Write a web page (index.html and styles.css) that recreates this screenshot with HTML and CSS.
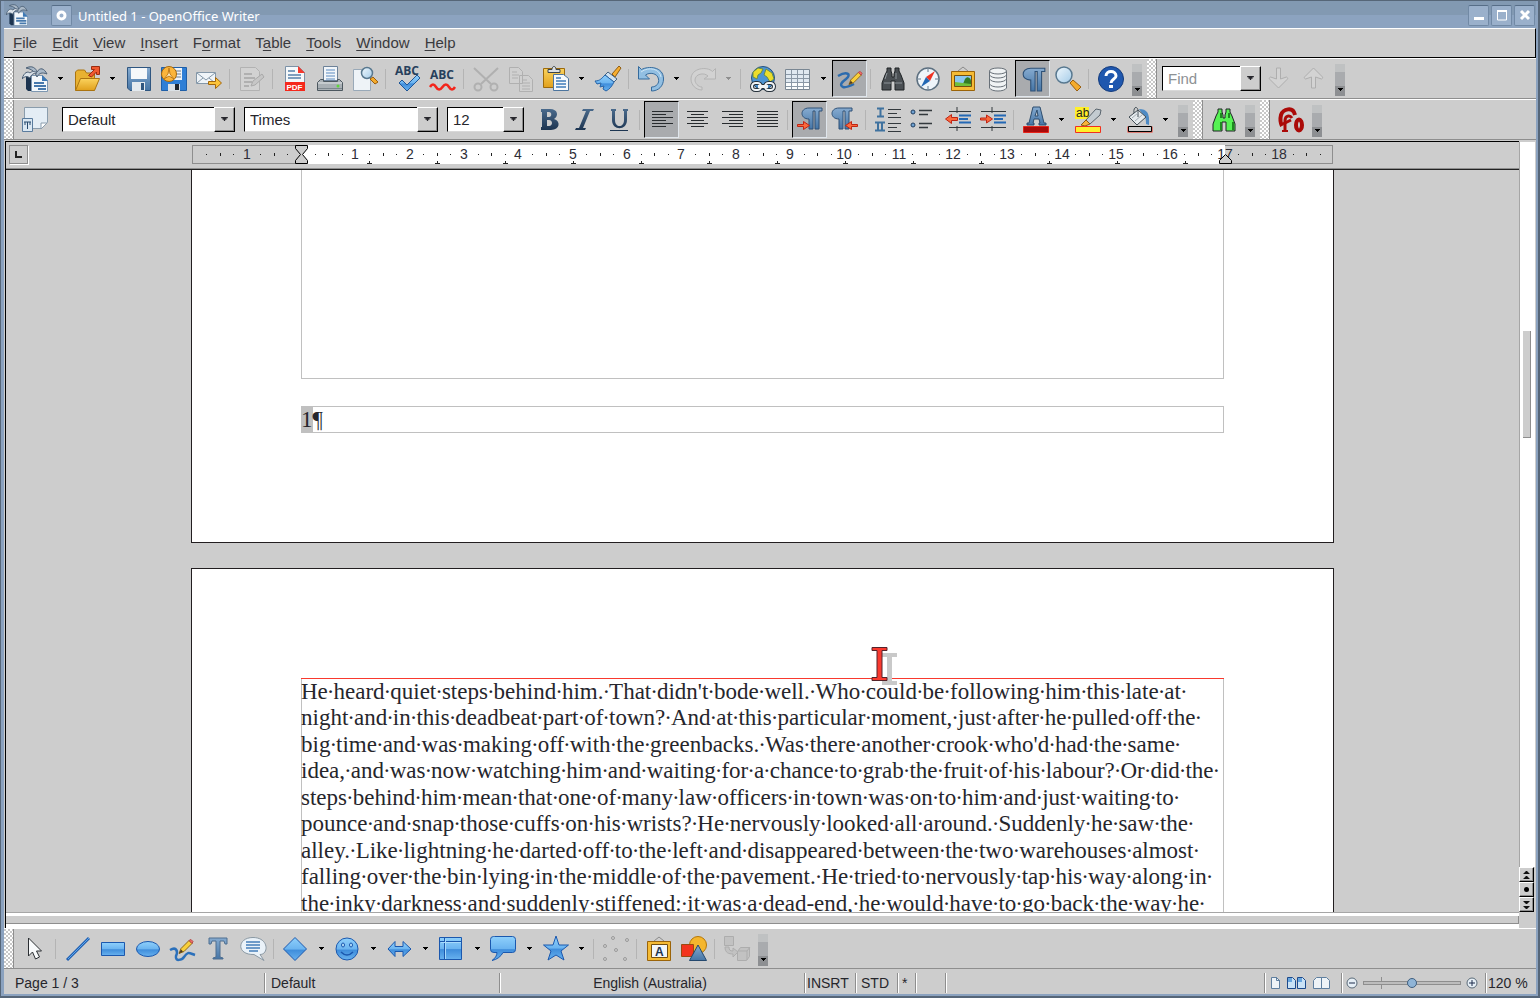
FILE: index.html
```html
<!DOCTYPE html>
<html lang="en">
<head>
    <meta charset="UTF-8">
    <title>Untitled 1 - OpenOffice Writer</title>
    <link rel="stylesheet" href="styles.css">
</head>
<body>
    <!-- shared gradients and symbols -->
    <svg class="defs" width="0" height="0" aria-hidden="true">
        <defs>
            <linearGradient id="blue" x1="0" y1="0" x2="0" y2="1"><stop offset="0" stop-color="#8fd0fb"/><stop offset=".5" stop-color="#6bb4f0"/><stop offset=".55" stop-color="#3f8ddb"/><stop offset="1" stop-color="#68b2ef"/></linearGradient>
            <linearGradient id="steel" x1="0" y1="0" x2="0" y2="1"><stop offset="0" stop-color="#86abd0"/><stop offset="1" stop-color="#4575a6"/></linearGradient>
            <linearGradient id="gold" x1="0" y1="0" x2="0" y2="1"><stop offset="0" stop-color="#fbd35e"/><stop offset="1" stop-color="#e0a01c"/></linearGradient>
            <linearGradient id="navy" x1="0" y1="0" x2="0" y2="1"><stop offset="0" stop-color="#4a6a8c"/><stop offset="1" stop-color="#1c3450"/></linearGradient>
            <linearGradient id="glass" x1="0" y1="0" x2="1" y2="1"><stop offset="0" stop-color="#f0f8fd"/><stop offset="1" stop-color="#a4cbe8"/></linearGradient>
        </defs>
        <symbol id="arrow" viewBox="0 0 5 3"><path d="M0 0h5v1H4v1H3v1H2V2H1V1H0z" fill="currentColor"/></symbol>
        <symbol id="writer" viewBox="0 0 26 26">
            <path d="M4 9h9v16H6l-2-2z" fill="#1c3450"/>
            <path d="M9.500 9.500h11l5 5v11h-16z" fill="#f4f8fb" stroke="#7d97b1"/>
            <path d="M20 9v6h6z" fill="#3d78b4"/>
            <path d="M12 17h10M12 20h12M16 23h8" stroke="#4779ad" stroke-width="2"/>
            <path d="M4 2c6-3 10 0 11 4 3-5 7-4 10 2-5-2-8-1-10 3-2-5-5-8-11-9z" fill="#a9b8c7" stroke="#4c6076"/>
            <path d="M0 13c2-7 6-8 8-6 2-2 5-2 7 0-4 0-6 2-7 5-3-2-5-2-8 1z" fill="#dce3ea" stroke="#4c6076"/>
        </symbol>
        <symbol id="pencil" viewBox="0 0 16 16"><path d="M1 15l2-5 8-8 3 3-8 8z" fill="#f8cf3b" stroke="#8f6816"/><path d="M11 2l2-1 2 2-1 2z" fill="#ef6c68" stroke="#b64a48"/><path d="M1 15l2-4 2 2z" fill="#4d3a22"/></symbol>
        <symbol id="pilcrow" viewBox="0 0 22 24"><path d="M21 2v3h-3v18h-4V5h-2v18H8V13C3 13 1 10 1 7.500S3 2 8 2z" fill="url(#steel)" stroke="#2e5177"/></symbol>
        <symbol id="red-arrow" viewBox="0 0 13 9"><path d="M.5 3.500h6v-3l6 4-6 4v-3h-6z" fill="#fb6a3c" stroke="#c02414"/></symbol>
        <symbol id="binoculars" viewBox="0 0 26 26"><path d="M7 2h4v3l1 3v3h2V8l1-3V2h4v3l2 4 3 8v7h-9v-9h-4v9H2v-7l3-8 2-4z" fill="currentColor" stroke="#1e2225"/></symbol>
    </svg>

    <div class="window">
        <header class="titlebar">
            <svg class="app-icon"><use href="#writer"/></svg>
            <button class="wm" aria-label="Window menu"><svg width="11" height="11"><circle cx="5.500" cy="5.500" r="3.500" fill="none" stroke="#fff" stroke-width="3"/></svg></button>
            <h1>Untitled 1 - OpenOffice Writer</h1>
            <button class="wm" aria-label="Minimize"><svg width="12" height="12"><path d="M1 9.500h10" stroke="#fff" stroke-width="3"/></svg></button>
            <button class="wm" aria-label="Maximize"><svg width="12" height="12"><path d="M1.500 2h9v9h-9z" fill="none" stroke="#fff"/><path d="M1 2h10" stroke="#fff" stroke-width="2"/></svg></button>
            <button class="wm" aria-label="Close"><svg width="12" height="12"><path d="M2 2l8 8M10 2l-8 8" stroke="#fff" stroke-width="3"/></svg></button>
        </header>

        <nav class="menubar">
            <a href="#"><u>F</u>ile</a>
            <a href="#"><u>E</u>dit</a>
            <a href="#"><u>V</u>iew</a>
            <a href="#"><u>I</u>nsert</a>
            <a href="#">F<u>o</u>rmat</a>
            <a href="#">T<u>a</u>ble</a>
            <a href="#"><u>T</u>ools</a>
            <a href="#"><u>W</u>indow</a>
            <a href="#"><u>H</u>elp</a>
        </nav>

        <!-- standard toolbar -->
        <div class="toolbar">
            <span class="grip"></span>
            <button class="tool" aria-label="New"><svg><use href="#writer"/></svg></button>
            <button class="drop" aria-label="New menu"><svg><use href="#arrow"/></svg></button>
            <button class="tool" aria-label="Open"><svg viewBox="0 0 26 26"><path d="M1.500 24V6l2-2h7l2 3h8v17z" fill="#e8b232" stroke="#ab7410"/><path d="M1.500 24.500l5-12h19l-5 12z" fill="url(#gold)" stroke="#ab7410"/><path d="M14.500 9.500l6-6h-3v-3h8v8h-3V6l-5 5z" fill="#f0592f" stroke="#9c2c10"/></svg></button>
            <button class="drop" aria-label="Open menu"><svg><use href="#arrow"/></svg></button>
            <button class="tool" aria-label="Save"><svg viewBox="0 0 26 26"><path d="M1.500 1.500h23v23H4l-2.500-2.500z" fill="url(#steel)" stroke="#2f5680"/><path d="M5 2h16v11H5z" fill="#f5f8fa"/><path d="M6 16h13v9H6z" fill="#e4eaef"/><path d="M15 17h3v7h-3z" fill="#2f5680"/></svg></button>
            <button class="tool" aria-label="Save As"><svg viewBox="0 0 26 26"><path d="M.5 1.500h25v23H.5z" fill="#2f7fd6" stroke="#1f5fa8"/><path d="M12 2h9v12h-9z" fill="#eef3f7"/><path d="M15 5h5M15 8h5M15 11h5" stroke="#6c7c8c"/><path d="M7 18h12v7H7z" fill="#dbe1e6"/><path d="M14 18h4v6h-4z" fill="#20262d"/><circle cx="8" cy="8" r="7.500" fill="#fbb53b" stroke="#a5680d"/><path d="M8 2l1 6 4 5-5-3-5 3 4-5z" fill="#fff3cf" stroke="#c07a14"/></svg></button>
            <button class="tool" aria-label="E-mail"><svg viewBox="0 0 26 26"><path d="M.5 6.500h19v11H.5z" fill="#eff4f8" stroke="#8497a8"/><path d="M1 7l9 7 9-7M1 17l6-5M19 17l-6-5" fill="none" stroke="#8497a8"/><path d="M12.500 15.500h7v-4l6 5.500-6 5.500v-4h-7z" fill="#fbc43a" stroke="#a4660c"/></svg></button>
            <span class="sep"></span>
            <button class="tool" aria-label="Edit file" disabled><svg viewBox="0 0 26 26"><path d="M1.500 1.500h15l4 4v19h-19z" fill="#d2d2d2" stroke="#b2b2b2"/><path d="M5 8h8M5 12h11M5 16h8M5 20h5" stroke="#b0b0b0" stroke-width="2"/><path d="M12 20l2-5 9-7 2 3-9 8z" fill="#c6c6c6" stroke="#a9a9a9"/></svg></button>
            <span class="sep"></span>
            <button class="tool" aria-label="Export PDF"><svg viewBox="0 0 26 26"><path d="M3.500.5h13l6 6v18h-19z" fill="#f5f8fa" stroke="#7c92a8"/><path d="M16 0v7h7z" fill="#f5382c"/><path d="M6 5h7M6 9h13M6 12h13" stroke="#5580aa" stroke-width="1.500"/><path d="M3 16h20v9H3z" fill="#f5281c"/><text x="4.500" y="24" class="pdf">PDF</text></svg></button>
            <button class="tool" aria-label="Print"><svg viewBox="0 0 26 26"><path d="M6.500.5h14v14h-14z" fill="#f2f6fa" stroke="#6d8299"/><path d="M9 4h9M9 7h9M9 10h9M9 13h9" stroke="#5b8ac0"/><path d="M.5 16.500l3-3h3v2h14v-2h2l3 3v8H.5z" fill="#a9b0b5" stroke="#4d5860"/><path d="M1 17h24" stroke="#e3e6e8"/><path d="M1 22.500h24" stroke="#7c868d"/><circle cx="21" cy="20" r="1.500" fill="#5ed83c"/></svg></button>
            <button class="tool" aria-label="Page Preview"><svg viewBox="0 0 26 26"><path d="M1.500 3.500h17v21h-17z" fill="#eef3f7" stroke="#99a9b8"/><path d="M18 13l5 5 3-2-5-5z" fill="#f4ab2c" stroke="#9a5d0d"/><circle cx="15" cy="7" r="5.500" fill="url(#glass)" stroke="#58788f" stroke-width="1.500"/></svg></button>
            <span class="sep"></span>
            <button class="tool" aria-label="Spelling"><svg viewBox="0 0 26 26"><text x="0" y="9" class="abc">ABC</text><path d="M4 17l3-3 5 5L22 9l3 3-13 13z" fill="url(#blue)" stroke="#1e5697"/></svg></button>
            <button class="tool" aria-label="AutoSpellcheck"><svg viewBox="0 0 26 26"><text x="0" y="13" class="abc">ABC</text><path d="M0 21q3-5 6 0t6.500 0 6.500 0 6 0" fill="none" stroke="#f3251b" stroke-width="2.500"/></svg></button>
            <span class="sep"></span>
            <button class="tool" aria-label="Cut" disabled><svg viewBox="0 0 26 26" fill="none" stroke="#b0b0b0" stroke-width="2"><path d="M1 2l17 16M25 2L8 18"/><circle cx="5" cy="21" r="3.500"/><circle cx="21" cy="21" r="3.500"/></svg></button>
            <button class="tool" aria-label="Copy" disabled><svg viewBox="0 0 26 26" fill="#d0d0d0" stroke="#b0b0b0"><path d="M1.500 1.500h9l4 4v12h-13zM11.500 9.500h9l4 4v12h-13z"/><path d="M4 6h5M4 9h7M4 12h6M14 14h5M14 17h8M14 20h8M14 23h8"/></svg></button>
            <button class="tool" aria-label="Paste"><svg viewBox="0 0 26 26"><path d="M.5 2.500h21v19H.5z" fill="url(#gold)" stroke="#9c6a0c"/><path d="M5 6.500h12v-3h-4c0-4-4-4-4 0H5z" fill="#dce0e3" stroke="#3d444a"/><path d="M10.500 8.500h10l5 4v12h-15z" fill="#f6f9fb" stroke="#4d759e"/><path d="M13 12h5M13 15h10M13 18h10M13 21h10" stroke="#3f7cba" stroke-width="1.500"/></svg></button>
            <button class="drop" aria-label="Paste menu"><svg><use href="#arrow"/></svg></button>
            <button class="tool" aria-label="Format Paintbrush"><svg viewBox="0 0 26 26"><path d="M17 8l7-8 2 2-6 9z" fill="#f6ae31" stroke="#8f5c10"/><path d="M13 6l9 7-3 3-9-7z" fill="#cfe2f1" stroke="#44617f"/><path d="M10 9l9 7c-2 4-4 7-8 9l-3-2 1-3-4 1 1-4-4 1-2-3c5 0 7-3 10-6z" fill="url(#blue)" stroke="#2664a8"/></svg></button>
            <span class="sep"></span>
            <button class="tool" aria-label="Undo"><svg viewBox="0 0 26 26"><path d="M.5.500l3 3C10 0 25.500 0 25.500 13c0 7-5 12-12 12v-4c5 0 8-4 7-8-1-6-9-7-13-4l4 4H.5z" fill="#92bfe2" stroke="#356b9d"/><path d="M3 6c8-6 19-3 20 5" fill="none" stroke="#cfe6f5"/></svg></button>
            <button class="drop" aria-label="Undo menu"><svg><use href="#arrow"/></svg></button>
            <button class="tool" aria-label="Redo" disabled><svg viewBox="0 0 26 26"><path d="M25.500 2.500l-3 3C17 0 1 2 1 13c0 6 5 11 11 11v-3c-4 0-7-4-7-7 0-6 9-8 13-4l-4 3h11.500z" fill="#d2d2d2" stroke="#b4b4b4"/></svg></button>
            <button class="drop dim" aria-label="Redo menu"><svg><use href="#arrow"/></svg></button>
            <span class="sep"></span>
            <button class="tool" aria-label="Hyperlink"><svg viewBox="0 0 26 26"><circle cx="13" cy="12" r="11.500" fill="#4d94d2" stroke="#24517e"/><path d="M3 6l5-4 5 1-2 4-3 2-1 4-4-2zM16 3l6 4 2 6-4 3-3-5-3-2z" fill="#ecdd2b" stroke="#6b8e46"/><g fill="none" stroke="#27323c" stroke-width="4"><rect x="2" y="17" width="9" height="7" rx="3.500"/><rect x="15" y="17" width="9" height="7" rx="3.500"/><path d="M8 20.500h10" stroke-width="5"/></g><g fill="none" stroke="#f1f4f6" stroke-width="2"><rect x="2" y="17" width="9" height="7" rx="3.500"/><rect x="15" y="17" width="9" height="7" rx="3.500"/><path d="M8 20.500h10" stroke-width="3"/></g></svg></button>
            <button class="tool" aria-label="Table"><svg viewBox="0 0 26 26"><path d="M.5 3.500h24v20H.5z" fill="#fbfdfd" stroke="#7a8793"/><path d="M1 4h23v12H1z" fill="#e0e9f1"/><path d="M1 8.500h23M1 12.500h23M1 16.500h23M1 20.500h23M6.500 4v19M12.500 4v19M18.500 4v19" stroke="#8a98a6"/></svg></button>
            <button class="drop" aria-label="Table menu"><svg><use href="#arrow"/></svg></button>
            <button class="tool pressed" aria-label="Show Draw Functions"><svg viewBox="0 0 26 26"><path d="M1 10c9-5 14-2 8 3-4 3-7 6-3 8 3 1 7-1 11-3" fill="none" stroke="#2b6bae" stroke-width="2.500"/><use href="#pencil" x="11" y="4" width="15" height="16"/></svg></button>
            <span class="sep"></span>
            <button class="tool find" aria-label="Find and Replace"><svg viewBox="0 0 26 26"><use href="#binoculars"/><path d="M4 17h7M15 17h7M7 7l-2 6M16 7v6" stroke="#8e969b"/></svg></button>
            <button class="tool" aria-label="Navigator"><svg viewBox="0 0 26 26"><circle cx="13" cy="13" r="11" fill="#eff5fa" stroke="#5d7080" stroke-width="1.500"/><path d="M13 3v3M13 20v3M3 13h3M20 13h3" stroke="#62788c"/><path d="M20 5l-5 10-4-4z" fill="#ee3324"/><path d="M6 21l5-10 4 4z" fill="#2368b4"/></svg></button>
            <button class="tool" aria-label="Gallery"><svg viewBox="0 0 26 26"><path d="M8 5l5-4 5 4" fill="none" stroke="#8a8a8a"/><path d="M1.500 5.500h23v19h-23z" fill="#f5bb35" stroke="#9b6409"/><path d="M4.500 9.500h17v11h-17z" fill="#8ac6ee" stroke="#744f0e"/><path d="M13 18l2-5c3-4 6 0 6 2v5h-8z" fill="#327b24"/><path d="M5 16l8 1 8 1v2H5z" fill="#6fbf3c"/></svg></button>
            <button class="tool" aria-label="Data Sources"><svg viewBox="0 0 26 26" fill="#f0f3f4" stroke="#687078"><path d="M4.500 18v4c2 4 15 4 17 0v-4M4.500 13v5c2 4 15 4 17 0v-5M4.500 9v4c2 4 15 4 17 0V9M4.500 5v4c2 4 15 4 17 0V5"/><ellipse cx="13" cy="5" rx="8.500" ry="3"/></svg></button>
            <button class="tool pressed" aria-label="Nonprinting Characters"><svg viewBox="0 0 26 26"><use href="#pilcrow" x="2" y="0" width="24" height="26"/></svg></button>
            <button class="tool" aria-label="Zoom"><svg viewBox="0 0 26 26"><path d="M15 17l7 8 4-4-8-7z" fill="#f4ab2c" stroke="#9a5d0d"/><circle cx="9" cy="9" r="8" fill="url(#glass)" stroke="#58788f" stroke-width="1.500"/></svg></button>
            <span class="sep"></span>
            <button class="tool" aria-label="Help"><svg viewBox="0 0 26 26"><circle cx="13" cy="13" r="12.500" fill="#1f57ae" stroke="#133b7c"/><path d="M8 10c0-6 10-6 10 0 0 3-5 3-5 7" fill="none" stroke="#fff" stroke-width="3"/><path d="M11 19h4v3h-4z" fill="#fff"/></svg></button>
            <button class="overflow" aria-label="More buttons"><svg><use href="#arrow"/></svg></button>
            <span class="grip mid"></span>
            <div class="combo combo-find">
                <input type="text" placeholder="Find" aria-label="Find">
                <span class="combo-arrow"><svg><use href="#arrow"/></svg></span>
            </div>
            <button class="tool" aria-label="Find Next" disabled><svg viewBox="0 0 26 26"><path d="M10.500 2v11l-6-2c-2 1-1 2 0 3l8 8 8-8c1-1 2-2 0-3l-6 2V2z" fill="#d3d3d3" stroke="#aeaeae"/></svg></button>
            <button class="tool" aria-label="Find Previous" disabled><svg viewBox="0 0 26 26"><path d="M10.500 22V11l-6 2c-2-1-1-2 0-3l8-8 8 8c1 1 2 2 0 3l-6-2v11z" fill="#d3d3d3" stroke="#aeaeae"/></svg></button>
            <button class="overflow" aria-label="More buttons"><svg><use href="#arrow"/></svg></button>
        </div>

        <!-- formatting toolbar -->
        <div class="toolbar">
            <span class="grip"></span>
            <button class="tool" aria-label="Styles and Formatting"><svg viewBox="0 0 26 26"><path d="M2.500.5h23v15l-6 6h-17z" fill="#e4edf5" stroke="#8a9cac"/><path d="M19 22v-6h6z" fill="#fff" stroke="#8a9cac"/><path d="M.5 11.500h10v13H.5z" fill="#dae7f2" stroke="#5b7c9e"/><path d="M2 15h7M5.500 15v7M3 15v3M8 15v3" stroke="#27496d"/></svg></button>
            <div class="combo combo-style">
                <select aria-label="Apply Style"><option>Default</option></select>
                <span class="combo-arrow"><svg><use href="#arrow"/></svg></span>
            </div>
            <div class="combo combo-font">
                <select aria-label="Font Name"><option>Times</option></select>
                <span class="combo-arrow"><svg><use href="#arrow"/></svg></span>
            </div>
            <div class="combo combo-size">
                <select aria-label="Font Size"><option>12</option></select>
                <span class="combo-arrow"><svg><use href="#arrow"/></svg></span>
            </div>
            <button class="tool" aria-label="Bold"><svg viewBox="0 0 26 26"><path d="M5 2h9c8 0 9 7 4 10 7 2 6 11-3 11H5v-3h1V5H5zm6 3v5h2c3 0 3-5 0-5zm0 8v6h2c4 0 4-6 0-6z" fill="url(#navy)"/></svg></button>
            <button class="tool" aria-label="Italic"><svg viewBox="0 0 26 26"><path d="M12 2h11l-1 2h-3l-7 17h3l-1 2H4l1-2h3l7-17h-4z" fill="url(#navy)"/></svg></button>
            <button class="tool" aria-label="Underline"><svg viewBox="0 0 26 26"><path d="M5 2h5v2H9v9c0 8 9 8 9 0V4h-1V2h5v2h-1v9c0 11-15 11-15 0V4H5zM4 23h18v1H4z" fill="url(#navy)"/></svg></button>
            <span class="sep"></span>
            <button class="tool pressed" aria-label="Align Left"><svg viewBox="0 0 26 26" stroke="#272b2e"><path d="M3 4.500h21M3 7.500h14M3 10.500h21M3 13.500h14M3 16.500h21M3 19.500h14"/></svg></button>
            <button class="tool" aria-label="Centered"><svg viewBox="0 0 26 26" stroke="#272b2e"><path d="M3 4.500h21M7 7.500h13M3 10.500h21M7 13.500h13M3 16.500h21M7 19.500h13"/></svg></button>
            <button class="tool" aria-label="Align Right"><svg viewBox="0 0 26 26" stroke="#272b2e"><path d="M3 4.500h21M10 7.500h14M3 10.500h21M10 13.500h14M3 16.500h21M10 19.500h14"/></svg></button>
            <button class="tool" aria-label="Justified"><svg viewBox="0 0 26 26" stroke="#272b2e"><path d="M3 4.500h21M3 7.500h21M3 10.500h21M3 13.500h21M3 16.500h21M3 19.500h21"/></svg></button>
            <span class="sep"></span>
            <button class="tool pressed" aria-label="Left-To-Right"><svg viewBox="0 0 26 26"><use href="#pilcrow" x="4" y="-1" width="22" height="24"/><use href="#red-arrow" x="0" y="14" width="13" height="9"/></svg></button>
            <button class="tool" aria-label="Right-To-Left"><svg viewBox="0 0 26 26"><use href="#pilcrow" x="-1" y="-1" width="22" height="24"/><path d="M25.500 17.500h-6v-3l-6 4 6 4v-3h6z" fill="#fb6a3c" stroke="#c02414"/></svg></button>
            <span class="sep"></span>
            <button class="tool" aria-label="Numbering"><svg viewBox="0 0 26 26"><path d="M2 1.500h7M2 9.500h7M5.500 1v9M0 15.500h10M0 23.500h10M3 15v9M7 15v9" stroke="#3f729f" stroke-width="2"/><path d="M13 2.500h13M13 6.500h9M13 10.500h13M13 16.500h13M13 20.500h9M13 24.500h13" stroke="#33393d"/></svg></button>
            <button class="tool" aria-label="Bullets"><svg viewBox="0 0 26 26"><path d="M9 3.500h13M9 7.500h9M9 16.500h13M9 20.500h9" stroke="#33393d" stroke-width="1.500"/><circle cx="3" cy="5" r="2" fill="#6da0d0" stroke="#203e60"/><circle cx="3" cy="18" r="2" fill="#6da0d0" stroke="#203e60"/></svg></button>
            <button class="tool" aria-label="Decrease Indent"><svg viewBox="0 0 26 26"><path d="M4 4.500h22M12 0v6M4 20.500h22M12 19v5" stroke="#33393d"/><path d="M14 8.500h12M14 12h9M14 15.500h12" stroke="#2469b5" stroke-width="2"/><path d="M12.500 10.500h-6v-3l-6 4.500 6 4.500v-3h6z" fill="#fb6a3c" stroke="#c02414"/></svg></button>
            <button class="tool" aria-label="Increase Indent"><svg viewBox="0 0 26 26"><path d="M1 4.500h25M12 0v6M1 20.500h25M12 19v5" stroke="#33393d"/><path d="M14 8.500h12M14 12h9M14 15.500h12" stroke="#2469b5" stroke-width="2"/><use href="#red-arrow" x="0" y="7" width="13" height="10"/></svg></button>
            <span class="sep"></span>
            <button class="tool" aria-label="Font Color"><svg viewBox="0 0 26 26"><path d="M4 18v-2h2L10 0h7l4 16h2v2h-7v-2h1l-1-4h-5l-1 4h1v2zM12 9h3l-1-6z" fill="url(#steel)" stroke="#2d4d6e"/><path d="M.5 19.500h25v6H.5z" fill="#a80a0a" stroke="#e8241a"/></svg></button>
            <button class="drop" aria-label="Font Color menu"><svg><use href="#arrow"/></svg></button>
            <button class="tool" aria-label="Highlighting"><svg viewBox="0 0 26 26"><path d="M0 0h14v12H0z" fill="#fff02a"/><text x="1" y="10" class="ab">ab</text><path d="M11 13L21 2l5 1-1 5-10 9z" fill="#c3cbd1" stroke="#59646d"/><path d="M6 18l5-5 4 4-5 2z" fill="#f8b33a" stroke="#8b5711"/><path d="M.5 19.500h25v6H.5z" fill="#fff02a" stroke="#f0301f"/></svg></button>
            <button class="drop" aria-label="Highlighting menu"><svg><use href="#arrow"/></svg></button>
            <button class="tool" aria-label="Background Color"><svg viewBox="0 0 26 26"><path d="M12 2c8 0 11 4 10 16l-3-1c0-6-1-8-3-9z" fill="#4d8ac4"/><path d="M2 10l9-7 8 7-9 8z" fill="#e5eaed" stroke="#424d55"/><path d="M7 6c-1-7 4-7 4-2v6" fill="none" stroke="#424d55"/><path d="M5 11l6-5M8 14l7-6" stroke="#a3adb4"/><path d="M.5 19.500h25v6H.5z" fill="#f0301f"/><path d="M1.500 19.500h23v5h-23z" fill="#cecece" stroke="#000"/></svg></button>
            <button class="drop" aria-label="Background Color menu"><svg><use href="#arrow"/></svg></button>
            <button class="overflow" aria-label="More buttons"><svg><use href="#arrow"/></svg></button>
            <span class="grip mid"></span>
            <button class="tool green" aria-label="Search"><svg viewBox="0 0 26 26"><use href="#binoculars"/><path d="M10 6v5M10 15v8M18 6v5M22 15v8" stroke="#1e8a20" stroke-width="2"/></svg></button>
            <button class="overflow" aria-label="More buttons"><svg><use href="#arrow"/></svg></button>
            <span class="grip mid"></span>
            <button class="tool" aria-label="Fontwork"><svg viewBox="0 0 26 26" fill="none" stroke="#ab0a08"><path d="M17 8C15-1 5 2 3 8c-1 4-1 7 1 11" stroke-width="4"/><path d="M7 24V14c0-6 5-6 7-3" stroke-width="3"/><path d="M5 17l8-4" stroke-width="3"/><path d="M4 24h6" stroke-width="2"/><ellipse cx="21" cy="18" rx="3" ry="5.500" stroke-width="4"/></svg></button>
            <button class="overflow" aria-label="More buttons"><svg><use href="#arrow"/></svg></button>
        </div>

        <main class="workspace">
            <div class="editor">
                <div class="ruler-bar">
                    <button class="tab-type" aria-label="Tab type"><svg width="7" height="7"><path d="M1 0v6h6" fill="none" stroke="#222" stroke-width="2"/></svg></button>
                    <svg id="ruler" width="1142" height="20"></svg>
                </div>
                <div class="document">
                    <section class="page first">
                        <div class="frame body-frame"></div>
                        <div class="frame footer-frame"><span class="field">1</span>¶</div>
                    </section>
                    <section class="page second">
                        <svg class="text-cursor" width="30" height="42"><path d="M12 7h15v4h-5v24h5v4H12v-4h5V11h-5z" fill="#c9c9c9"/><path d="M2 1.500h15v3h-5v27h5v3H2v-3h5v-27H2z" fill="#f9392e" stroke="#55232a"/></svg>
                        <div class="frame text-frame">
                            <span>He·heard·quiet·steps·behind·him.·That·didn't·bode·well.·Who·could·be·following·him·this·late·at·</span>
                            <span>night·and·in·this·deadbeat·part·of·town?·And·at·this·particular·moment,·just·after·he·pulled·off·the·</span>
                            <span>big·time·and·was·making·off·with·the·greenbacks.·Was·there·another·crook·who'd·had·the·same·</span>
                            <span>idea,·and·was·now·watching·him·and·waiting·for·a·chance·to·grab·the·fruit·of·his·labour?·Or·did·the·</span>
                            <span>steps·behind·him·mean·that·one·of·many·law·officers·in·town·was·on·to·him·and·just·waiting·to·</span>
                            <span>pounce·and·snap·those·cuffs·on·his·wrists?·He·nervously·looked·all·around.·Suddenly·he·saw·the·</span>
                            <span>alley.·Like·lightning·he·darted·off·to·the·left·and·disappeared·between·the·two·warehouses·almost·</span>
                            <span>falling·over·the·bin·lying·in·the·middle·of·the·pavement.·He·tried·to·nervously·tap·his·way·along·in·</span>
                            <span>the·inky·darkness·and·suddenly·stiffened:·it·was·a·dead-end,·he·would·have·to·go·back·the·way·he·</span>
                        </div>
                    </section>
                </div>
                <div class="hscroll"><div class="hthumb"></div></div>
            </div>
            <div class="vscroll">
                <div class="vtrack"><div class="vthumb"></div></div>
                <button aria-label="Previous Page"><svg width="7" height="8"><path d="M0 3l3-3h1l3 3zM0 8l3-3h1l3 3z" fill="#111"/></svg></button>
                <button aria-label="Navigation"><svg width="7" height="7"><circle cx="3.500" cy="3.500" r="2.500" fill="#000"/></svg></button>
                <button aria-label="Next Page"><svg width="7" height="8"><path d="M0 0l3 3h1l3-3zM0 5l3 3h1l3-3z" fill="#111"/></svg></button>
            </div>
        </main>

        <!-- drawing toolbar -->
        <div class="toolbar">
            <span class="grip"></span>
            <button class="tool" aria-label="Select"><svg viewBox="0 0 26 26"><path d="M6.500 2v18l4-4 3 7 4-2-3-6h5z" fill="#f8fafb" stroke="#2b2f33"/></svg></button>
            <span class="sep"></span>
            <button class="tool" aria-label="Line"><svg viewBox="0 0 26 26"><path d="M2 24L24 2" stroke="#2161b4" stroke-width="3"/><path d="M3 23L24 2" stroke="#5da5e8"/></svg></button>
            <button class="tool" aria-label="Rectangle"><svg viewBox="0 0 26 26"><path d="M1.500 6.500h23v13h-23z" fill="url(#blue)" stroke="#1b58ae"/></svg></button>
            <button class="tool" aria-label="Ellipse"><svg viewBox="0 0 26 26"><ellipse cx="13" cy="13" rx="11.500" ry="7.500" fill="url(#blue)" stroke="#1b58ae"/></svg></button>
            <button class="tool" aria-label="Freeform Line"><svg viewBox="0 0 26 26"><path d="M0 14c7-4 8 2 6 6-1 6 6 4 8 1 4-6 5-4 11-2" fill="none" stroke="#2b70bb" stroke-width="2.500"/><use href="#pencil" x="8" y="2" width="16" height="17"/></svg></button>
            <button class="tool" aria-label="Text"><svg viewBox="0 0 26 26"><path d="M4 2h18v6h-2l-1-3h-4v16l3 1v1H8v-1l3-1V5H7L6 8H4z" fill="url(#steel)" stroke="#4f6f90"/></svg></button>
            <button class="tool" aria-label="Callout"><svg viewBox="0 0 26 26"><path d="M13 1.500c16 0 16 17 7 17l4 6-10-6C-4 19-3 1.500 13 1.500z" fill="#eaf2f9" stroke="#8a98a3"/><path d="M6 6h14M6 9h14M6 12h14M9 15h9" stroke="#457fb9" stroke-width="1.500"/></svg></button>
            <span class="sep"></span>
            <button class="tool" aria-label="Basic Shapes"><svg viewBox="0 0 26 26"><path d="M12 1.500L23.500 13 12 24.500.5 13z" fill="url(#blue)" stroke="#1b58ae"/></svg></button>
            <button class="drop" aria-label="Basic Shapes menu"><svg><use href="#arrow"/></svg></button>
            <button class="tool" aria-label="Symbol Shapes"><svg viewBox="0 0 26 26"><circle cx="12" cy="13" r="11" fill="url(#blue)" stroke="#1b58ae"/><path d="M6 16q6 6 12 0" fill="none" stroke="#1b58ae" stroke-width="1.500"/><ellipse cx="8" cy="9" rx="1.500" ry="2" fill="#b7e0fb" stroke="#1b58ae"/><ellipse cx="16" cy="9" rx="1.500" ry="2" fill="#b7e0fb" stroke="#1b58ae"/></svg></button>
            <button class="drop" aria-label="Symbol Shapes menu"><svg><use href="#arrow"/></svg></button>
            <button class="tool" aria-label="Block Arrows"><svg viewBox="0 0 26 26"><path d="M1 13l7-7.500v5h8v-5l8 7.500-8 7.500v-5H8v5z" fill="url(#blue)" stroke="#1b58ae"/></svg></button>
            <button class="drop" aria-label="Block Arrows menu"><svg><use href="#arrow"/></svg></button>
            <button class="tool" aria-label="Flowchart"><svg viewBox="0 0 26 26"><path d="M.5 1.500h22v22H.5z" fill="url(#blue)" stroke="#1b58ae"/><path d="M1 5.500h22M5.500 2v22" stroke="#1b58ae"/><path d="M2 6.500h20M6.500 3v20" stroke="#a8dafb"/></svg></button>
            <button class="drop" aria-label="Flowchart menu"><svg><use href="#arrow"/></svg></button>
            <button class="tool" aria-label="Callouts"><svg viewBox="0 0 26 26"><path d="M3.500.5h18q3 0 3 3v10q0 3-3 3H12c-2 4-6 7-11 8 3-2 5-5 5-8H3q-3.500 0-3.500-3v-10q0-3 3-3z" fill="url(#blue)" stroke="#1b58ae"/></svg></button>
            <button class="drop" aria-label="Callouts menu"><svg><use href="#arrow"/></svg></button>
            <button class="tool" aria-label="Stars"><svg viewBox="0 0 26 26"><path d="M13 0l3 9h9.500L18 15l3 9-8-5-8 5 3-9L.5 9H10z" fill="url(#blue)" stroke="#1b58ae"/></svg></button>
            <button class="drop" aria-label="Stars menu"><svg><use href="#arrow"/></svg></button>
            <span class="sep"></span>
            <button class="tool" aria-label="Points" disabled><svg viewBox="0 0 26 26" fill="none" stroke="#9a9a9a"><circle cx="10" cy="2" r="1.500"/><circle cx="24" cy="4" r="1.500"/><circle cx="2" cy="10" r="1.500"/><circle cx="13" cy="14" r="1.500"/><circle cx="2" cy="23" r="1.500"/><circle cx="22" cy="23" r="1.500"/></svg></button>
            <span class="sep"></span>
            <button class="tool" aria-label="Fontwork Gallery"><svg viewBox="0 0 26 26"><path d="M8 5l5-4 5 4" fill="none" stroke="#8a8a8a"/><path d="M1.500 5.500h23v19h-23z" fill="#f5bb35" stroke="#9b6409"/><path d="M5.500 8.500h16v13h-16z" fill="#f2f6f9" stroke="#744f0e"/><text x="9" y="20" class="art">A</text></svg></button>
            <button class="tool" aria-label="From File"><svg viewBox="0 0 26 26"><circle cx="17" cy="9" r="8.500" fill="#f4b62e" stroke="#b57708"/><path d="M.5 8.500h12v12H.5z" fill="#f3341d" stroke="#9c4a10"/><path d="M17 9l8.500 15.500h-17z" fill="url(#steel)" stroke="#23486e"/></svg></button>
            <span class="sep"></span>
            <button class="tool" aria-label="Extrusion" disabled><svg viewBox="0 0 26 26" fill="#c2c2c2" stroke="#adadad"><path d="M.5.5h9v9h-9zM1 11c0 6 4 7 8 7v3l5-5-5-4v3c-3 0-4-1-4-4z"/><path d="M13.500 15.500l3-4h9v9l-3 4h-9zM14 15h9v9M23 15l3-4"/></svg></button>
            <button class="overflow" aria-label="More buttons"><svg><use href="#arrow"/></svg></button>
        </div>

        <footer class="statusbar">
            <span class="status-page">Page 1 / 3</span>
            <span class="status-style">Default</span>
            <span class="status-lang">English (Australia)</span>
            <span class="status-mode">INSRT</span>
            <span class="status-sel">STD</span>
            <span class="status-mod">*</span>
            <span class="status-sign"></span>
            <span class="status-info"></span>
            <span class="status-view">
                <button aria-label="Single page"><svg width="10" height="12"><path d="M.5.5h5l3 3v8h-8z" fill="#eef3f7" stroke="#5f7f9f"/><path d="M5.500 0v3.500H9" fill="none" stroke="#5f7f9f"/></svg></button>
                <button aria-label="Several pages"><svg width="20" height="12"><path d="M.5.5h5l3 3v8h-8zM10.500.5h5l3 3v8h-8z" fill="#c9e2f6" stroke="#1c4a8c"/><path d="M1 1h4v4H1zM11 1h4v4h-4z" fill="#69a6de"/></svg></button>
                <button aria-label="Book mode"><svg width="18" height="12"><path d="M.5 3.500l3-3h5v11h-8zM8.500.5h5l3 3v8h-8z" fill="#eef3f7" stroke="#5f7f9f"/></svg></button>
            </span>
            <span class="status-zoom">
                <button aria-label="Zoom out"><svg width="12" height="12"><circle cx="6" cy="6" r="5" fill="#e6eff6" stroke="#5a6a78"/><path d="M3 6h6" stroke="#1c2c4c"/></svg></button>
                <input type="range" min="0" max="100" value="50" aria-label="Zoom">
                <button aria-label="Zoom in"><svg width="12" height="12"><circle cx="6" cy="6" r="5" fill="#e6eff6" stroke="#5a6a78"/><path d="M3 6h6M6 3v6" stroke="#1c2c4c"/></svg></button>
            </span>
            <span class="status-percent">120 %</span>
        </footer>
    </div>
    <script src="script.js"></script>
</body>
</html>
```
FILE: styles.css
```css
* {
    box-sizing: border-box;
}

body {
    margin: 0;
    background: #8ba2bf;
    color: #26262c;
    font-family: "Liberation Sans", Arial, sans-serif;
    font-size: 15px;
}

button {
    padding: 0;
    border: none;
    background: none;
    color: #000;
    font: inherit;
}

svg {
    display: block;
}

.defs {
    position: absolute;
}

.window {
    display: flex;
    flex-direction: column;
    height: 100vh;
    padding: 0 2px 2px 3px;
    border: 1px solid #566678;
    border-right-width: 2px;
    border-bottom-width: 2px;
}

/* title bar */
.titlebar {
    display: flex;
    align-items: center;
    gap: 2px;
    flex: none;
    height: 27px;
    padding: 1px 1px 0 2px;
    background: linear-gradient(#8299b2 14px, #8ca3c0 14px);
}

.titlebar h1 {
    flex: 1;
    margin: 0 0 0 4px;
    padding-top: 1px;
    color: #fff;
    font: 13px "Noto Sans", sans-serif;
}

.app-icon {
    width: 22px;
    height: 22px;
    margin-right: 21px;
}

.wm {
    display: flex;
    align-items: center;
    justify-content: center;
    width: 21px;
    height: 21px;
    border: 1px solid #7189a5;
    border-top-color: #566d87;
    border-radius: 2px;
    background: #9ab0cb;
}

/* menu bar */
.menubar {
    display: flex;
    align-items: center;
    flex: none;
    gap: 15px;
    height: 30px;
    padding: 0 0 2px 9px;
    border-top: 1px solid #fff;
    border-right: 1px solid #000;
    border-bottom: 1px solid #000;
    background: #cdcdcd;
}

.menubar a {
    color: #3a3a3e;
    text-decoration: none;
}

.menubar u {
    text-underline-offset: 2px;
}

/* toolbars */
.toolbar {
    display: flex;
    align-items: center;
    flex: none;
    height: 41px;
    border-top: 1px solid #fff;
    border-bottom: 1px solid #8e8e8e;
    background: #cdcdcd;
}

.grip {
    width: 10px;
    height: 39px;
    margin-right: 3px;
    border-right: 1px solid #8e8e8e;
    background: conic-gradient(#fff 25%, #c8c8c8 0 50%, #fff 0 75%, #c8c8c8 0) 0 0 / 4px 4px;
}

.grip.mid {
    margin-left: 5px;
}

.tool {
    display: flex;
    align-items: center;
    justify-content: center;
    width: 35px;
    height: 37px;
}

.tool svg {
    width: 26px;
    height: 26px;
    overflow: visible;
}

.pressed {
    border: 1px solid #e0e6ec;
    border-top-color: #000;
    border-left-color: #000;
    background: #a9abae;
}

.find {
    color: #4a4f53;
}

.green {
    color: #56f254;
}

.drop {
    display: flex;
    justify-content: center;
    width: 17px;
}

.drop svg,
.overflow svg {
    width: 5px;
    height: 3px;
}

.combo-arrow svg {
    width: 7px;
    height: 4px;
}

.dim {
    color: #8f8f8f;
}

.sep {
    width: 8px;
    height: 20px;
    background: linear-gradient(#b4b4b4, #b4b4b4) 3px 0 / 1px 100% no-repeat;
}

.overflow {
    display: flex;
    align-items: flex-end;
    justify-content: center;
    width: 10px;
    height: 32px;
    margin: 2px 0 0 4px;
    padding-bottom: 5px;
    background: linear-gradient(#bfc1c2 8px, #a9abae 8px 22px, #8d8f92 22px);
}

.pdf {
    fill: #fff;
    font: bold 8px "Liberation Sans", sans-serif;
}

.abc {
    fill: #27405c;
    font: bold 12px "Open Sans", sans-serif;
}

.ab {
    fill: #222;
    font: 12px "Liberation Sans", sans-serif;
}

.art {
    fill: #1c3450;
    font: bold 12px "Liberation Sans", sans-serif;
}

/* combo boxes */
.combo {
    display: grid;
    grid-template-columns: 1fr 21px;
    height: 26px;
    margin: 0 9px 0 0;
}

.combo select,
.combo input {
    grid-area: 1 / 1 / 2 / 3;
    width: 100%;
    height: 25px;
    margin: 0;
    padding: 0 22px 0 5px;
    appearance: none;
    border: 1px solid #d8d8d8;
    border-top: 1px solid #000;
    border-left: 1px solid #000;
    border-radius: 0;
    background: #fff;
    color: #26262c;
    font: inherit;
}

.combo input::placeholder {
    color: #8d9194;
}

.combo-arrow {
    display: flex;
    align-items: center;
    justify-content: center;
    grid-area: 1 / 2;
    z-index: 1;
    height: 25px;
    border: 1px solid #fff;
    border-right-color: #000;
    border-bottom: 1px solid #000;
    background: #cdcdcd;
    box-shadow: inset -1px -1px #8e8e8e;
    pointer-events: none;
}

.combo-style {
    width: 173px;
    margin-left: 10px;
}

.combo-font {
    width: 194px;
}

.combo-size {
    width: 77px;
    margin-right: 7px;
}

.combo-find {
    width: 99px;
    margin: 0 0 0 2px;
}

/* work area */
.workspace {
    display: flex;
    flex: 1;
    min-height: 0;
    border-top: 1px solid #cdcdcd;
    border-left: 1px solid #cdcdcd;
    background: #cdcdcd;
}

.editor {
    display: flex;
    flex-direction: column;
    flex: 1;
    min-width: 0;
    border-top: 1px solid #000;
    border-left: 1px solid #000;
}

.ruler-bar {
    display: grid;
    grid-template-columns: 1fr auto 1fr;
    flex: none;
    height: 28px;
    padding: 3px 0 0;
    border-bottom: 1px solid #222;
    box-shadow: inset 0 -1px #8e8e8e;
}

.tab-type {
    display: flex;
    align-items: center;
    justify-content: center;
    width: 19px;
    height: 19px;
    margin-left: 3px;
    border: 1px solid #8e8e8e;
    box-shadow: 1px 1px #fff;
}

#ruler text {
    fill: #2d2d36;
    font-size: 14px;
    text-anchor: middle;
}

.document {
    display: flex;
    flex-direction: column;
    align-items: center;
    flex: 1;
    min-height: 0;
    gap: 25px;
    overflow: hidden;
}

.page {
    position: relative;
    flex: none;
    width: 1143px;
    padding: 0 109px;
    border: 1px solid #221e20;
    background: #fff;
    font: 23px/26px "Liberation Serif", "Times New Roman", serif;
}

.first {
    padding-bottom: 109px;
    border-top: none;
}

.second {
    padding-top: 109px;
    padding-bottom: 200px;
}

.frame {
    box-shadow: inset 0 0 0 1px #c0c0c0;
}

.body-frame {
    height: 209px;
    margin-bottom: 27px;
    box-shadow: inset 1px -1px #c0c0c0, inset -1px 0 #c0c0c0;
}

.footer-frame {
    height: 27px;
    line-height: 28px;
}

.field {
    display: inline-block;
    height: 27px;
    background: #c0c0c0;
}

.text-frame {
    display: grid;
    grid-template-rows: repeat(9, 1fr);
    height: 239px;
    padding-top: 1px;
    box-shadow: inset 0 1px #f9392e, inset 1px 0 #c0c0c0, inset -1px 0 #c0c0c0;
    white-space: nowrap;
}

.mark {
    margin: 0 -1px;
    font-style: normal;
}

.text-cursor {
    position: absolute;
    top: 77px;
    left: 678px;
}

/* scroll bars */
.hscroll {
    flex: none;
    height: 16px;
    padding: 3px 0 4px;
    border-top: 1px solid #a6a6a6;
    background: #fff;
}

.hthumb {
    height: 8px;
    border-right: 1px solid #8e8e8e;
    border-bottom: 1px solid #8e8e8e;
    background: #cdcdcd;
}

.vscroll {
    display: flex;
    flex-direction: column;
    width: 17px;
    padding: 1px 1px 16px 0;
}

.vtrack {
    flex: 1;
    padding: 189px 3px 0;
    border-left: 1px solid #a6a6a6;
    background: #fff;
}

.vthumb {
    height: 107px;
    margin-right: 1px;
    border-right: 1px solid #8e8e8e;
    border-bottom: 1px solid #8e8e8e;
    background: #cdcdcd;
}

.vscroll button {
    display: flex;
    align-items: center;
    justify-content: center;
    height: 15px;
    margin-right: 1px;
    border: 1px solid #fff;
    border-right-color: #000;
    border-bottom-color: #000;
    background: #cdcdcd;
    box-shadow: inset -1px -1px #8e8e8e;
}

/* status bar */
.statusbar {
    display: flex;
    align-items: center;
    flex: none;
    height: 25px;
    padding: 3px 0 1px;
    background: #cdcdcd;
    font-size: 14px;
}

.statusbar > span {
    display: flex;
    align-items: center;
    flex: none;
    height: 20px;
    padding-left: 6px;
    border-left: 1px solid #8e8e8e;
    box-shadow: inset 1px 0 #fff;
}

.statusbar .status-page {
    width: 260px;
    padding-left: 11px;
    border-left: none;
    box-shadow: none;
}

.status-style {
    width: 235px;
}

.statusbar .status-lang {
    justify-content: center;
    width: 305px;
    padding: 0 4px 0 0;
}

.statusbar .status-mode {
    width: 51px;
    padding-left: 2px;
}

.statusbar .status-sel {
    width: 42px;
    padding-left: 5px;
}

.statusbar .status-mod {
    width: 18px;
    padding-left: 4px;
}

.status-sign {
    width: 30px;
}

.statusbar .status-info {
    flex: 1;
}

.status-view {
    gap: 6px;
    width: 77px;
}

.status-zoom {
    gap: 5px;
    width: 144px;
}

.statusbar .status-zoom {
    padding-left: 4px;
}

.status-zoom input {
    width: 98px;
    height: 12px;
    margin: 0;
    appearance: none;
    background: linear-gradient(#8e8e8e, #8e8e8e) 18px 0 / 1px 100% no-repeat;
}

.status-zoom input::-webkit-slider-runnable-track {
    height: 4px;
    border: 1px solid #8e8e8e;
    background: #bdbdbd;
}

.status-zoom input::-webkit-slider-thumb {
    width: 10px;
    height: 10px;
    margin-top: -4px;
    appearance: none;
    border: 1px solid #3f5f80;
    border-radius: 50%;
    background: #8fb4d6;
}

.statusbar .status-percent {
    width: 51px;
    padding-left: 2px;
}
```
FILE: script.js
```js
// horizontal ruler, one unit is a centimetre at the current zoom
const ruler = document.getElementById("ruler");
const unit = 1141 / 21;
const origin = 109;
const rightMargin = 1033;

function addShape(name, attrs, text) {
    const elem = document.createElementNS("http://www.w3.org/2000/svg", name);
    for (const key in attrs) {
        elem.setAttribute(key, attrs[key]);
    }
    if (text) {
        elem.textContent = text;
    }
    ruler.appendChild(elem);
}

addShape("rect", {x: 0.5, y: 0.5, width: 1140, height: 18, fill: "#cdcdcd", stroke: "#8e8e8e"});
addShape("rect", {x: origin, y: 0, width: rightMargin - origin, height: 19, fill: "#fff"});

for (let q = -7; q < 76; q++) {
    const x = Math.round(origin + q * unit / 4);
    if (q % 4 === 0) {
        if (q !== 0) {
            addShape("text", {x: x, y: 14}, String(Math.abs(q / 4)));
        }
    } else if (q % 2 === 0) {
        addShape("rect", {x: x, y: 8, width: 1, height: 3, fill: "#222"});
    } else {
        addShape("rect", {x: x, y: 9, width: 1, height: 1, fill: "#222"});
    }
}

// default tab stops
for (let x = origin + 68; x < rightMargin; x += 68) {
    addShape("path", {d: `M${x - 2} 18.500h5M${x + 0.5} 16v2`, stroke: "#222"});
}

// indent markers
addShape("path", {d: "M103.500.5h12v3l-5 6 5 6v3h-12v-3l5-6-5-6z", fill: "#cdcdcd", stroke: "#000"});
addShape("path", {d: "M1027.500 18.500v-3l6-6 6 6v3z", fill: "#cdcdcd", stroke: "#000"});

// nonprinting characters: wrap every space mark of the text
for (const line of document.querySelectorAll(".text-frame span")) {
    line.innerHTML = line.textContent.replaceAll("·", '<i class="mark">·</i>');
}
```
